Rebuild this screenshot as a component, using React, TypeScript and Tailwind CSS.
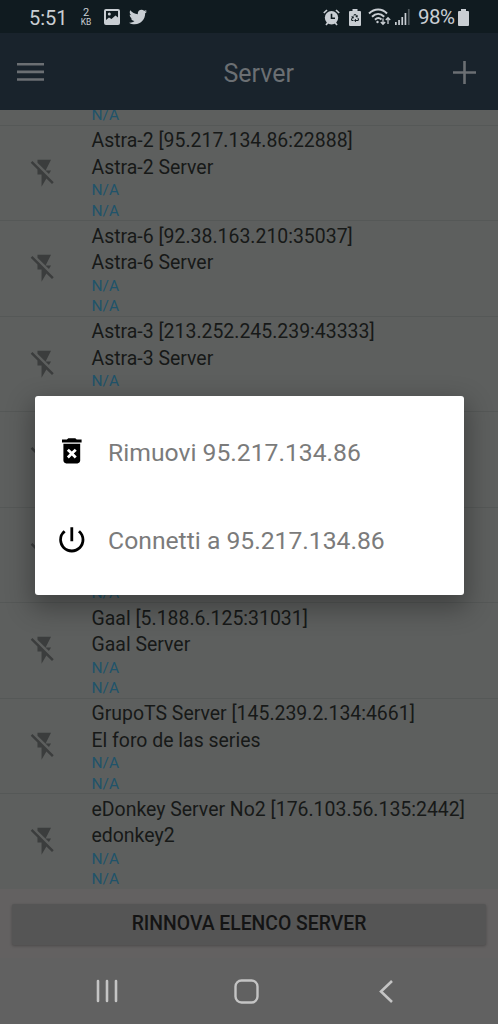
import { FaRecycle, FaTwitter } from 'react-icons/fa'
import { MdDeleteForever, MdFlashOff, MdPowerSettingsNew } from 'react-icons/md'

const servers = [
  { name: 'Astra-2 [95.217.134.86:22888]', description: 'Astra-2 Server' },
  { name: 'Astra-6 [92.38.163.210:35037]', description: 'Astra-6 Server' },
  { name: 'Astra-3 [213.252.245.239:43333]', description: 'Astra-3 Server' },
  { name: '', description: '' },
  { name: '', description: '' },
  { name: 'Gaal [5.188.6.125:31031]', description: 'Gaal Server' },
  { name: 'GrupoTS Server [145.239.2.134:4661]', description: 'El foro de las series' },
  { name: 'eDonkey Server No2 [176.103.56.135:2442]', description: 'edonkey2' },
]

function StatusBar() {
  return (
    <div className="flex h-[33px] shrink-0 items-center bg-[#101b20] pt-px pr-[29px] pl-[29px] text-[#c9ced3]">
      <span className="mt-px w-[51px] text-[20px] leading-none">5:51</span>
      <div className="flex w-[12px] flex-col items-center">
        <span className="text-[11px] leading-[11px]">2</span>
        <span className="text-[8.5px] leading-[9px]">KB</span>
      </div>
      <svg className="ml-[12px] h-[16px] w-[16px]" viewBox="0 0 16 16" fill="none">
        <rect x="1" y="1" width="14" height="14" rx="1" stroke="currentColor" strokeWidth="2" />
        <circle cx="5.3" cy="5" r="1.5" fill="currentColor" />
        <path d="M2 11l3-2.500 2.500 1.500 4-3.500L14 8.500V14H2z" fill="currentColor" />
      </svg>
      <FaTwitter className="ml-[9px] h-[18px] w-[18px]" />

      <div className="ml-auto flex items-center">
        <svg className="h-[17px] w-[17px]" viewBox="0 0 17 17" fill="none">
          <circle cx="8.5" cy="8.7" r="6.7" fill="currentColor" />
          <path d="M.8 4L4 1M16.2 4L13 1M3 16l2-2.5M14 16l-2-2.5" stroke="currentColor" strokeWidth="1.7" />
          <path d="M8.5 4.8v4.4H12" stroke="#101b20" strokeWidth="1.6" />
        </svg>
        <div className="relative ml-[9px] h-[17px] w-[12px]">
          <svg className="h-full w-full" viewBox="0 0 12 17">
            <path d="M3.5 0h5v2H11q1 0 1 1v13q0 1-1 1H1q-1 0-1-1V3q0-1 1-1h2.5z" fill="currentColor" />
          </svg>
          <FaRecycle className="absolute top-[5px] left-[2px] h-[8px] w-[8px] text-[#101b20]" />
        </div>
        <svg className="ml-[7px] h-[18px] w-[23px]" viewBox="0 0 23 18" fill="none" stroke="currentColor">
          <path d="M1 5.5C6.5.2 14 .2 19 5.5M4 8.700c3.700-3.700 8.500-3.700 12.200 0M7 11.700c2-2 4.500-2 6.500-.2" strokeWidth="2" />
          <circle cx="9.5" cy="14" r="1.2" fill="currentColor" stroke="none" />
          <path d="M15 10.500v6M12.800 14l2.200 2.300 2.200-2.300M20 16v-6M17.800 12l2.200-2.300 2.200 2.300" strokeWidth="1.3" />
        </svg>
        <svg className="ml-[4px] h-[16px] w-[15px]" viewBox="0 0 15 16" fill="currentColor">
          <path d="M0 13h1.700v3H0zM3.200 11h1.700v5H3.200zM6.400 8h1.700v8H6.400zM9.600 4h1.700v12H9.600z" />
          <path d="M12.900 0h1.700v16h-1.700z" opacity=".35" />
        </svg>
        <span className="mt-px ml-[8px] w-[39px] text-[20.5px] leading-none tracking-[-0.5px]">98%</span>
        <svg className="ml-[1px] h-[17px] w-[11px]" viewBox="0 0 11 17" fill="currentColor">
          <path d="M3 0h5v2h2q1 0 1 1v13q0 1-1 1H1q-1 0-1-1V3q0-1 1-1h2z" />
        </svg>
      </div>
    </div>
  )
}

function Header() {
  return (
    <header className="flex h-[77px] shrink-0 items-center bg-[#19232c] pr-[22px] pl-[17px] text-[#6b6f73]">
      <svg className="h-[18px] w-[27px]" viewBox="0 0 27 18" fill="currentColor">
        <path d="M0 0h27v2.600H0zM0 7.600h27v2.600H0zM0 15.200h27v2.600H0z" />
      </svg>
      <h1 className="mt-[3px] ml-[179.5px] text-[25px] leading-none">Server</h1>
      <svg className="mt-px ml-auto h-[23px] w-[23px]" viewBox="0 0 23 23" stroke="currentColor" strokeWidth="2.6">
        <path d="M11.500 0v23M0 11.500h23" />
      </svg>
    </header>
  )
}

function ServerRow({ name, description }: { name: string; description: string }) {
  return (
    <li className="flex h-[95.5px] shrink-0 border-t border-[#555857]">
      <div className="flex w-[91.5px] shrink-0 items-center pl-[27.5px]">
        <MdFlashOff className="h-[32.5px] w-[32.5px] text-[#3b3d3d]" />
      </div>
      <div className="pt-[2.6px] whitespace-nowrap">
        <p className="h-[26.5px] text-[19.45px] leading-[26.5px] text-[#171918]">{name}</p>
        <p className="h-[25.6px] text-[19.45px] leading-[26px] text-[#171918]">{description}</p>
        <p className="text-[15.5px] leading-[20.4px] text-[#20536a]">N/A</p>
        <p className="text-[15.5px] leading-[20.4px] text-[#20536a]">N/A</p>
      </div>
    </li>
  )
}

function ServerDialog() {
  return (
    <div
      role="dialog"
      className="absolute top-[395.5px] left-[34.5px] flex h-[199.5px] w-[429px] flex-col justify-center rounded-[3px] bg-white text-[24.7px] text-[#7b7b7b] shadow-[0_10px_26px_4px_rgba(0,0,0,0.3)]"
    >
      <button className="flex h-[88.5px] items-center pl-[20.5px]">
        <MdDeleteForever className="h-[33.6px] w-[33.6px] text-black" />
        <span className="mt-[4px] ml-[19.5px]">Rimuovi 95.217.134.86</span>
      </button>
      <button className="flex h-[88.5px] items-center pl-[20.5px]">
        <MdPowerSettingsNew className="h-[33.6px] w-[33.6px] text-black" />
        <span className="mt-[3px] ml-[19.5px]">Connetti a 95.217.134.86</span>
      </button>
    </div>
  )
}

function NavigationBar() {
  return (
    <nav className="flex h-[66px] shrink-0 items-center justify-between bg-[#616161] pr-[105px] pl-[96px] text-[#c4c4c4]">
      <svg className="h-[24px] w-[22px]" viewBox="0 0 22 24" stroke="currentColor" strokeWidth="2.6" strokeLinecap="round">
        <path d="M2 2v20M11 2v20M20 2v20" />
      </svg>
      <svg className="mr-[5px] h-[25px] w-[25px]" viewBox="0 0 25 25" fill="none" stroke="currentColor" strokeWidth="2.4">
        <rect x="1.5" y="1.5" width="22" height="22" rx="6" />
      </svg>
      <svg className="h-[23px] w-[14px]" viewBox="0 0 14 23" fill="none" stroke="currentColor" strokeWidth="2.6">
        <path d="M13 1L2 11.500 13 22" />
      </svg>
    </nav>
  )
}

export default function App() {
  return (
    <div className="relative flex h-[1024px] w-[498px] flex-col overflow-hidden bg-[#636161] font-[Roboto,sans-serif]">
      <StatusBar />
      <Header />
      <ul className="flex h-[778.5px] shrink-0 flex-col justify-end overflow-hidden bg-[#5d5f5e]">
        <ServerRow name="" description="" />
        {servers.map((server, i) => (
          <ServerRow key={i} name={server.name} description={server.description} />
        ))}
      </ul>
      <div className="h-[69.5px] shrink-0 px-[12px] pt-[15px]">
        <button className="h-[41px] w-full rounded-[2px] bg-[#555555] text-[19.35px] font-medium text-[#141414] shadow-[0_1px_3px_rgba(0,0,0,0.25)]">
          RINNOVA ELENCO SERVER
        </button>
      </div>
      <NavigationBar />
      <ServerDialog />
    </div>
  )
}
